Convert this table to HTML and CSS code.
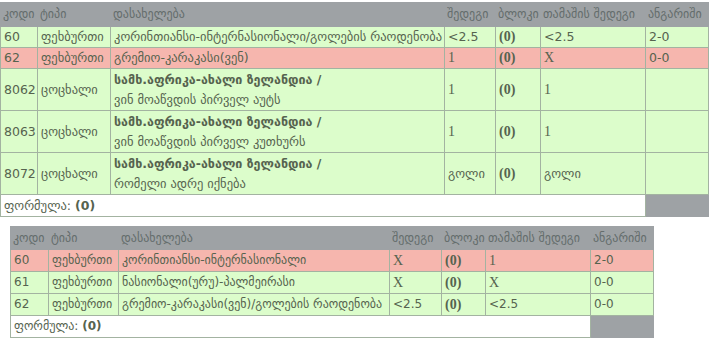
FILE: index.html
```html
<!DOCTYPE html>
<html>
<head>
<meta charset="utf-8">
<link rel="stylesheet" href="styles.css">
</head>
<body>
<table class="grid grid-a">
  <colgroup>
    <col class="w-code1"><col class="w-type1"><col class="w-name1"><col class="w-res1"><col class="w-block1"><col class="w-game1"><col class="w-score1">
  </colgroup>
  <tr class="head">
    <th>კოდი</th><th>ტიპი</th><th>დასახელება</th><th>შედეგი</th><th>ბლოკი</th><th>თამაშის შედეგი</th><th>ანგარიში</th>
  </tr>
  <tr class="ok">
    <td>60</td><td>ფეხბურთი</td><td>კორინთიანსი-ინტერნასიონალი/გოლების რაოდენობა</td><td>&lt;2.5</td><td class="ser b">(0)</td><td>&lt;2.5</td><td>2-0</td>
  </tr>
  <tr class="bad">
    <td>62</td><td>ფეხბურთი</td><td>გრემიო-კარაკასი(ვენ)</td><td class="ser">1</td><td class="ser b">(0)</td><td class="ser">X</td><td>0-0</td>
  </tr>
  <tr class="ok two">
    <td>8062</td><td>ცოცხალი</td><td><span class="event">სამხ.აფრიკა-ახალი ზელანდია /</span><span class="sub">ვინ მოაწვდის პირველ აუტს</span></td><td class="ser">1</td><td class="ser b">(0)</td><td class="ser">1</td><td></td>
  </tr>
  <tr class="ok two">
    <td>8063</td><td>ცოცხალი</td><td><span class="event">სამხ.აფრიკა-ახალი ზელანდია /</span><span class="sub">ვინ მოაწვდის პირველ კუთხურს</span></td><td class="ser">1</td><td class="ser b">(0)</td><td class="ser">1</td><td></td>
  </tr>
  <tr class="ok two">
    <td>8072</td><td>ცოცხალი</td><td><span class="event">სამხ.აფრიკა-ახალი ზელანდია /</span><span class="sub">რომელი ადრე იქნება</span></td><td>გოლი</td><td class="ser b">(0)</td><td>გოლი</td><td></td>
  </tr>
  <tr class="foot">
    <td colspan="6">ფორმულა: <b>(0)</b></td><td class="filler"></td>
  </tr>
</table>

<table class="grid grid-b">
  <colgroup>
    <col class="w-code2"><col class="w-type2"><col class="w-name2"><col class="w-res2"><col class="w-block2"><col class="w-game2"><col class="w-score2">
  </colgroup>
  <tr class="head">
    <th>კოდი</th><th>ტიპი</th><th>დასახელება</th><th>შედეგი</th><th>ბლოკი</th><th>თამაშის შედეგი</th><th>ანგარიში</th>
  </tr>
  <tr class="bad">
    <td>60</td><td>ფეხბურთი</td><td>კორინთიანსი-ინტერნასიონალი</td><td class="ser">X</td><td class="ser b">(0)</td><td class="ser">1</td><td>2-0</td>
  </tr>
  <tr class="ok">
    <td>61</td><td>ფეხბურთი</td><td>ნასიონალი(ურუ)-პალმეირასი</td><td class="ser">X</td><td class="ser b">(0)</td><td class="ser">X</td><td>0-0</td>
  </tr>
  <tr class="ok">
    <td>62</td><td>ფეხბურთი</td><td>გრემიო-კარაკასი(ვენ)/გოლების რაოდენობა</td><td>&lt;2.5</td><td class="ser b">(0)</td><td>&lt;2.5</td><td>0-0</td>
  </tr>
  <tr class="foot">
    <td colspan="6">ფორმულა: <b>(0)</b></td><td class="filler"></td>
  </tr>
</table>
</body>
</html>
```

FILE: styles.css
```css
html, body {
  margin: 0;
  padding: 0;
  background: #ffffff;
}

body {
  padding-top: 2px;
  font-family: "DejaVu Sans", sans-serif;
  color: #56634f;
}

.grid {
  border-collapse: collapse;
  table-layout: fixed;
}

.grid-a {
  width: 708px;
  margin-left: 0;
  font-size: 12.5px;
}

.grid-b {
  width: 643px;
  margin-left: 10px;
  margin-top: 9px;
  font-size: 12px;
}

.w-code1 { width: 37px; }
.w-type1 { width: 73px; }
.w-name1 { width: 334px; }
.w-res1 { width: 51px; }
.w-block1 { width: 45px; }
.w-game1 { width: 105px; }
.w-score1 { width: 63px; }

.w-code2 { width: 38px; }
.w-type2 { width: 70px; }
.w-name2 { width: 271px; }
.w-res2 { width: 52px; }
.w-block2 { width: 44px; }
.w-game2 { width: 105px; }
.w-score2 { width: 63px; }

.grid th,
.grid td {
  padding: 0 0 0 3px;
  text-align: left;
  vertical-align: middle;
  white-space: nowrap;
  overflow: hidden;
}

.head th {
  background: #9ea2a5;
  color: #646d6c;
  font-weight: normal;
  font-size: 12px;
  height: 23px;
  line-height: 23px;
  border: 1px solid #9ea2a5;
  padding-left: 2px;
}

.grid-b .head th {
  height: 22px;
  line-height: 22px;
}

.grid td {
  border: 1px solid #a3b3a1;
  line-height: 20px;
  height: 20px;
}

.ok td {
  background: #dcfdcb;
}

.bad td {
  background: #f6b6ae;
}

.grid-b tr.ok td,
.grid-b tr.bad td {
  line-height: 21px;
  height: 21px;
}

.two td {
  height: 41px;
}

.event,
.sub {
  display: block;
  line-height: 20px;
}

.event {
  font-weight: bold;
  line-height: 21px;
}

.ser {
  font-family: "Liberation Serif", serif;
  font-size: 14px;
}

.b {
  font-weight: bold;
  font-size: 14px;
}

.foot td {
  background: #ffffff;
  height: 21px;
  line-height: 21px;
}

.foot td.filler {
  background: #9ea2a5;
  border-color: #9ea2a5;
}
```
